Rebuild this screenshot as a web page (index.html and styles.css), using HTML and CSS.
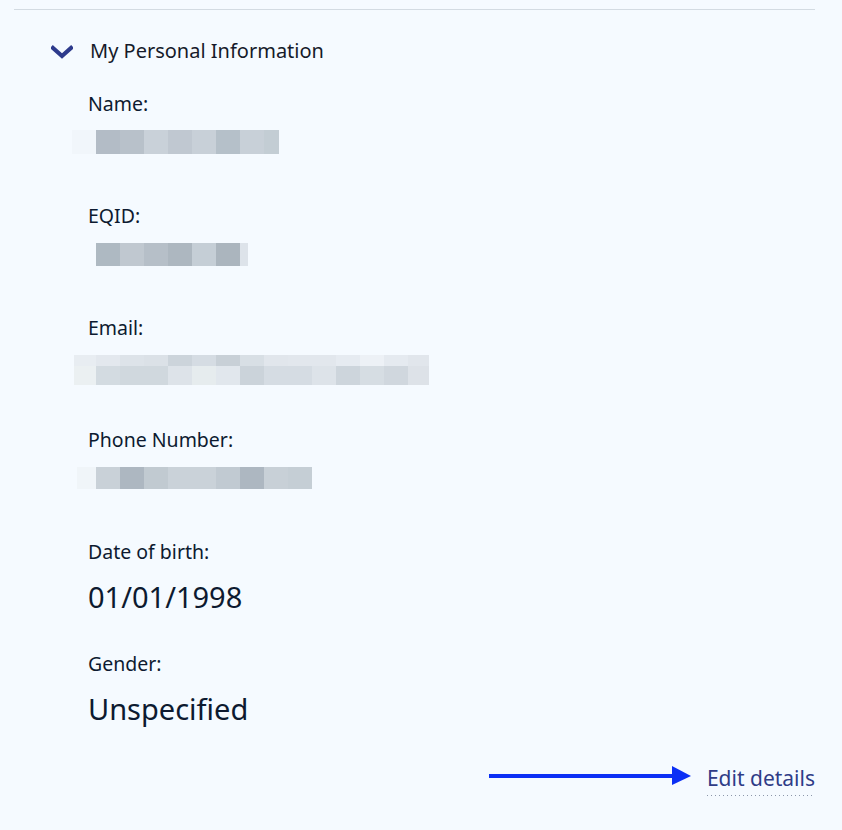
FILE: index.html
```html
<!DOCTYPE html>
<html lang="en">
<head>
<meta charset="utf-8">
<title>My Personal Information</title>
<link rel="stylesheet" href="styles.css">
</head>
<body>
<div class="panel">
  <div class="divider"></div>
  <div class="section-head">
    <svg class="chevron" width="22" height="14" viewBox="0 0 22 14" aria-hidden="true">
      <path d="M2 3 L11 11 L20 3" fill="none" stroke="#2d3a8c" stroke-width="4.2" stroke-linecap="square" stroke-linejoin="miter"/>
    </svg>
    <h2 class="section-title">My Personal Information</h2>
  </div>
  <div class="fields">
    <div class="field">
      <div class="label">Name:</div>
      <div class="blob blob-name"></div>
    </div>
    <div class="field">
      <div class="label">EQID:</div>
      <div class="blob blob-eqid"></div>
    </div>
    <div class="field">
      <div class="label">Email:</div>
      <div class="blob blob-email"></div>
    </div>
    <div class="field">
      <div class="label">Phone Number:</div>
      <div class="blob blob-phone"></div>
    </div>
    <div class="field">
      <div class="label">Date of birth:</div>
      <div class="value">01/01/1998</div>
    </div>
    <div class="field">
      <div class="label">Gender:</div>
      <div class="value">Unspecified</div>
    </div>
  </div>
  <div class="actions">
    <svg class="arrow" width="203" height="20" viewBox="0 0 203 20" aria-hidden="true">
      <rect x="0" y="8" width="186" height="4" fill="#0b2ff5"/>
      <polygon points="183,0 202,10 183,19" fill="#0b2ff5"/>
    </svg>
    <a class="edit-link" href="#">Edit details</a>
  </div>
</div>
</body>
</html>
```

FILE: styles.css
```css
* { box-sizing: border-box; }

html, body {
  margin: 0;
  padding: 0;
  background: #f5faff;
}

body {
  font-family: "Noto Sans", Lato, sans-serif;
  color: #0d1a30;
  width: 842px;
  height: 830px;
  overflow: hidden;
}

.panel {
  padding: 9px 27px 0 14px;
}

.divider {
  height: 1px;
  background: #d3dbe2;
}

.section-head {
  display: flex;
  align-items: center;
  height: 82px;
  padding-left: 37px;
}

.chevron {
  display: block;
  flex: none;
  margin-top: 2px;
}

.section-title {
  margin: 0 0 0 17px;
  font-size: 20px;
  line-height: 26px;
  font-weight: 400;
  color: #161a2a;
}

.fields {
  padding-left: 74px;
}

.field {
  height: 112px;
}

.label {
  font-size: 19.5px;
  line-height: 24px;
}

.value {
  margin-top: 15px;
  font-size: 29px;
  line-height: 35px;
}

.blob {
  margin-top: 14px;
}

.blob-name {
  margin-left: -16px;
  width: 207px;
  height: 24px;
  background: linear-gradient(to right,
    #f1f6fb 0 24px, #b3bcc6 24px 48px, #b8c1ca 48px 72px, #c9d1d9 72px 96px,
    #c0c8d1 96px 120px, #c8d0d8 120px 144px, #b5c0c9 144px 168px,
    #c8d0d8 168px 192px, #c3cdd4 192px 207px);
}

.blob-eqid {
  margin-top: 15px;
  margin-left: 8px;
  width: 152px;
  height: 23px;
  background: linear-gradient(to right,
    #aeb9c2 0 24px, #c0c8d0 24px 48px, #b6bfc8 48px 72px, #adb7c0 72px 96px,
    #c5ced6 96px 120px, #abb5be 120px 144px, #dde3ea 144px 152px);
}

.blob-email {
  margin-top: 15px;
  margin-left: -14px;
  width: 355px;
  height: 30px;
  background:
    linear-gradient(to right,
      #e8edf2 0 22px, #e3e8ee 22px 46px, #dde3e9 46px 70px, #dbe1e7 70px 94px,
      #ccd4db 94px 118px, #d5dce3 118px 142px, #c8d0d7 142px 166px,
      #d8dfe5 166px 190px, #e1e6ec 190px 214px, #e2e7ed 214px 262px,
      #e6ebf1 262px 286px, #edf1f6 286px 310px, #e5eaf0 310px 334px,
      #e1e6ec 334px 355px) top / 355px 11px no-repeat,
    linear-gradient(to right,
      #ebf0f2 0 22px, #d3dbe1 22px 46px, #d0d8de 46px 94px, #dde3e9 94px 118px,
      #e6ecee 118px 142px, #e1e7ed 142px 166px, #cbd3da 166px 190px,
      #d5dce3 190px 238px, #dde3e9 238px 262px, #cdd5dc 262px 286px,
      #d6dde3 286px 310px, #d0d7de 310px 334px, #dde2e8 334px 355px) bottom / 355px 19px no-repeat;
}

.blob-phone {
  margin-top: 15px;
  margin-left: -11px;
  width: 235px;
  height: 22px;
  background: linear-gradient(to right,
    #f0f5f9 0 19px, #c9d1d8 19px 43px, #adb7c1 43px 67px, #c1cad1 67px 91px,
    #cad2d9 91px 139px, #c1cad2 139px 163px, #adb7c1 163px 187px,
    #c8d0d7 187px 211px, #c5ced5 211px 235px);
}

.actions {
  display: flex;
  justify-content: flex-end;
  align-items: center;
  margin-top: 0;
  gap: 15px;
}

.arrow {
  display: block;
  flex: none;
  margin-bottom: 8px;
}

.edit-link {
  font-size: 21px;
  line-height: 28px;
  color: #2f3c87;
  text-decoration: none;
  padding-bottom: 4px;
  background: linear-gradient(to right, #8c97aa 1px, transparent 1px) bottom left / 4px 1px repeat-x;
}
```
